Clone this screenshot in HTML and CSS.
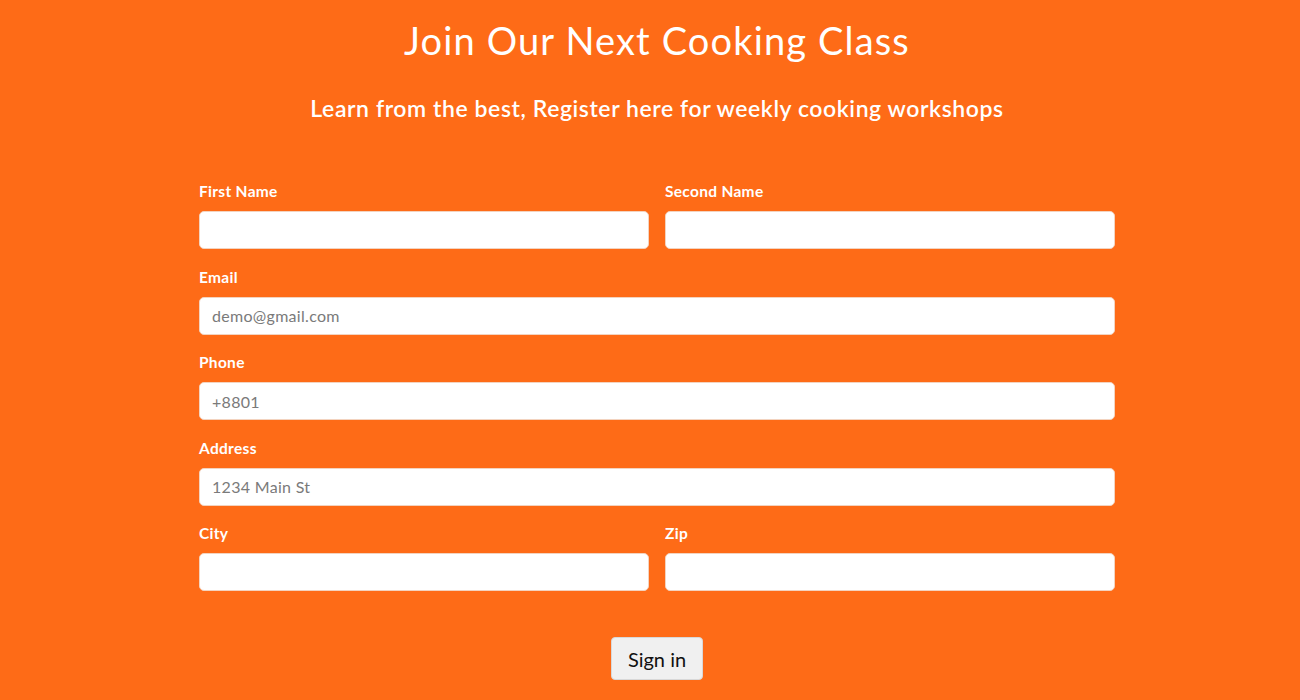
FILE: index.html
```html
<!DOCTYPE html>
<html lang="en">
<head>
<meta charset="utf-8">
<title>Join Our Next Cooking Class</title>
<link rel="stylesheet" href="styles.css">
</head>
<body>
<main class="page">
  <h1 class="title">Join Our Next Cooking Class</h1>
  <p class="subtitle">Learn from the best, Register here for weekly cooking workshops</p>
  <form class="form">
    <div class="row two">
      <div class="field">
        <label class="label">First Name</label>
        <input class="input" type="text">
      </div>
      <div class="field">
        <label class="label">Second Name</label>
        <input class="input" type="text">
      </div>
    </div>
    <div class="row">
      <div class="field">
        <label class="label">Email</label>
        <input class="input" type="email" placeholder="demo@gmail.com">
      </div>
    </div>
    <div class="row">
      <div class="field">
        <label class="label">Phone</label>
        <input class="input" type="text" placeholder="+8801">
      </div>
    </div>
    <div class="row">
      <div class="field">
        <label class="label">Address</label>
        <input class="input" type="text" placeholder="1234 Main St">
      </div>
    </div>
    <div class="row two">
      <div class="field">
        <label class="label">City</label>
        <input class="input" type="text">
      </div>
      <div class="field">
        <label class="label">Zip</label>
        <input class="input" type="text">
      </div>
    </div>
    <div class="actions">
      <button class="btn" type="button">Sign in</button>
    </div>
  </form>
</main>
</body>
</html>
```

FILE: styles.css
```css
html, body {
  margin: 0;
  padding: 0;
  background: #fe6b17;
}
body {
  font-family: Lato, "Open Sans", sans-serif;
  color: #fff;
  height: 700px;
  overflow: hidden;
}
.page {
  width: 916px;
  margin: 0 auto;
  padding: 18px 0 0 14px;
}
.title {
  margin: 0;
  text-align: center;
  font-size: 38px;
  font-weight: 400;
  line-height: 44px;
  letter-spacing: 1.15px;
}
.subtitle {
  margin: 32px 0 0;
  text-align: center;
  font-size: 23px;
  font-weight: 600;
  line-height: 28px;
  letter-spacing: 0.58px;
}
.form {
  margin-top: 60px;
  display: flex;
  flex-direction: column;
  gap: 18.5px;
}
.row {
  display: flex;
  gap: 16px;
}
.row.two .field {
  flex: 1;
}
.field {
  flex: 1;
  display: flex;
  flex-direction: column;
  gap: 11px;
}
.label {
  font-size: 15.5px;
  font-weight: 700;
  line-height: 18px;
  letter-spacing: 0.3px;
}
.input {
  height: 38px;
  box-sizing: border-box;
  border: 1px solid #f3d3bf;
  border-radius: 5px;
  background: #fff;
  padding: 0 12px;
  font-family: Lato, "Open Sans", sans-serif;
  font-size: 16px;
  letter-spacing: 0.3px;
  color: #555;
}
.input::placeholder {
  color: #7a7a7a;
}
.actions {
  display: flex;
  justify-content: center;
  margin-top: 27.5px;
}
.btn {
  width: 92px;
  height: 43px;
  border: 1px solid #d8d8d8;
  border-radius: 4px;
  background: #f0f0f0;
  font-family: Lato, "Open Sans", sans-serif;
  font-size: 20px;
  color: #111;
}
```
